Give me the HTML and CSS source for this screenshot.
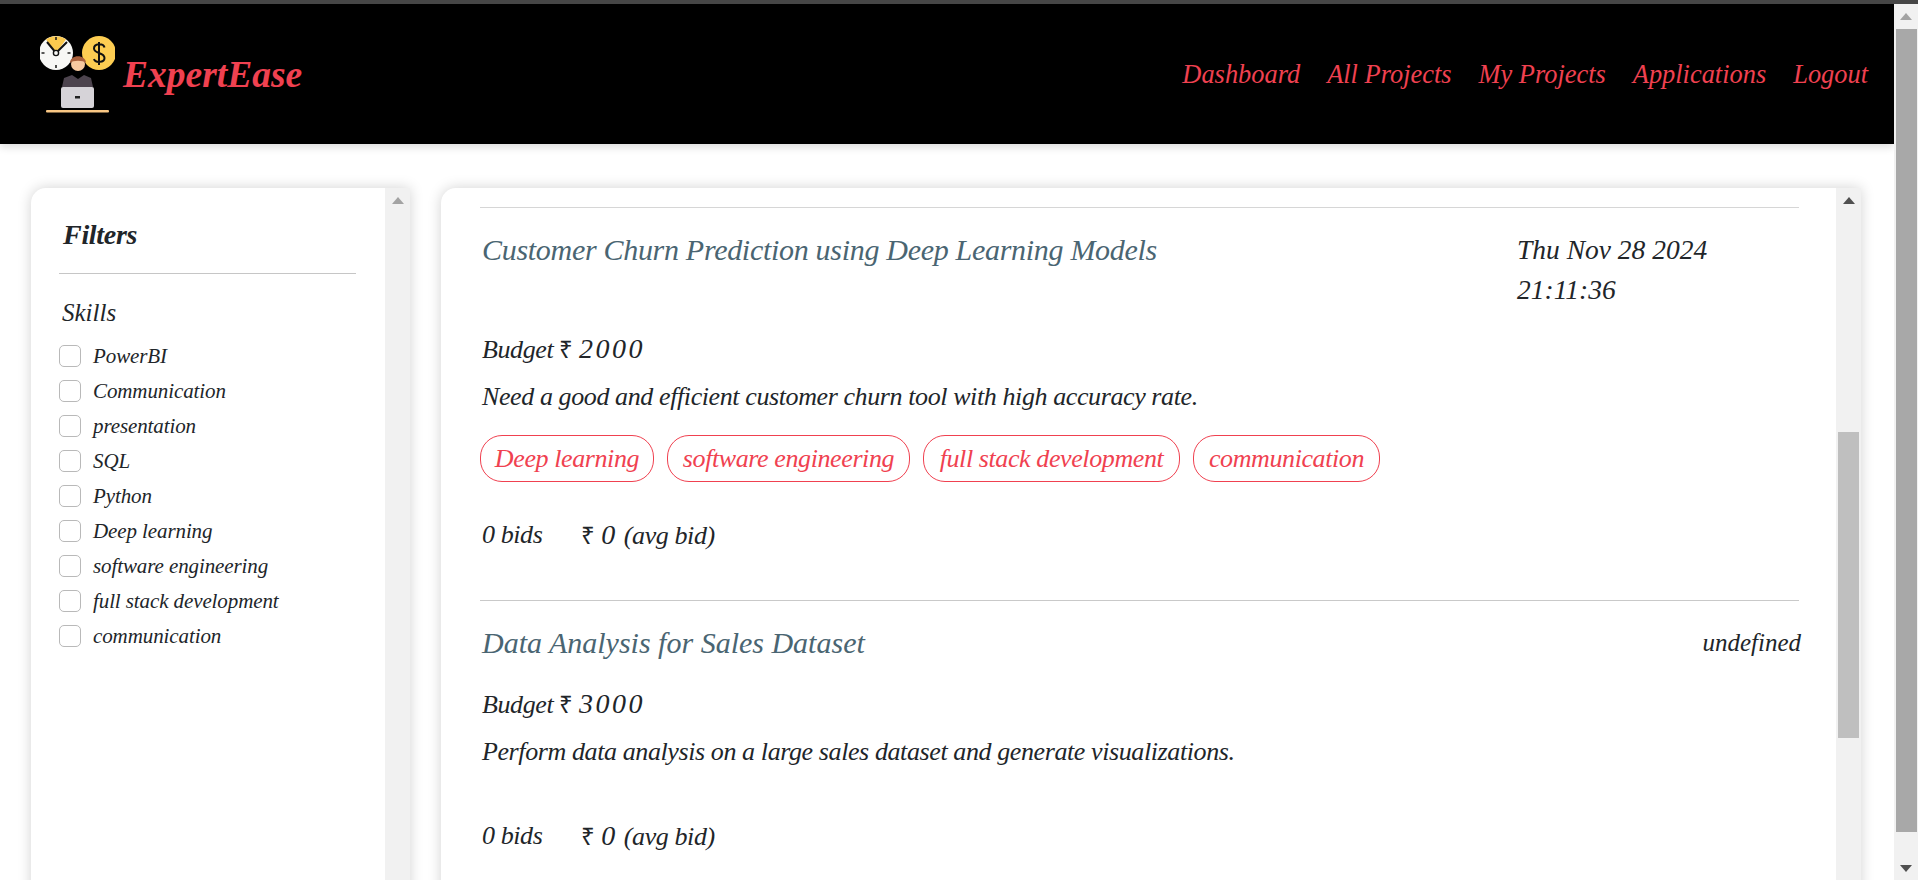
FILE: index.html
```html
<!DOCTYPE html>
<html lang="en">
<head>
<meta charset="utf-8">
<title>ExpertEase</title>
<link rel="stylesheet" href="styles.css">
</head>
<body>
<div class="topstrip"></div>
<div class="window">
  <div class="page">
    <header class="navbar">
      <a class="brand" href="#">
        <svg class="logo" viewBox="0 0 75 85" width="75" height="85" aria-hidden="true">
          <circle cx="16" cy="23" r="17" fill="#f7f7f5"/>
          <path d="M6 9.500 A17 17 0 0 1 26 9.500 L16 23 Z" fill="#fbc94e"/>
          <path d="M7 12 L16 23 L27 12" fill="none" stroke="#111" stroke-width="2"/>
          <circle cx="16" cy="23" r="2.600" fill="#f7f7f5" stroke="#111" stroke-width="1.400"/>
          <path d="M16 7v3M16 35v3M1.500 23h3M27.500 23h3" stroke="#222" stroke-width="1.600"/>
          <circle cx="59" cy="23" r="17" fill="#fdcd52"/>
          <path d="M64.500 17.500 C63.500 13 54 13 54 18.500 C54 24 64.500 22 64.500 28 C64.500 33 55 33 54 29 M59 12 V35" fill="none" stroke="#111" stroke-width="2"/>
          <path d="M22 57 L24 48 L32 45 L38 49 L44 45 L51 48 L53 57 Z" fill="#4d444e"/>
          <circle cx="38" cy="34" r="7" fill="#f7c9a0"/>
          <path d="M30 33 C30 24 46 24 46 33 C43 30 33 30 30 33 Z" fill="#a9603c"/>
          <rect x="21" y="57" width="33" height="21" rx="2" fill="#d6d3d8"/>
          <rect x="35" y="66" width="5" height="2.500" fill="#222"/>
          <rect x="6" y="80" width="63" height="2.500" rx="1" fill="#f9c784"/>
        </svg>
        <span class="brand-name">ExpertEase</span>
      </a>
      <nav class="nav-links">
        <a href="#">Dashboard</a>
        <a href="#">All Projects</a>
        <a href="#">My Projects</a>
        <a href="#">Applications</a>
        <a href="#">Logout</a>
      </nav>
    </header>

    <main class="content">
      <aside class="panel filters">
        <div class="panel-body filter-body">
          <h2 class="filter-title">Filters</h2>
          <hr class="rule-filter">
          <h3 class="skills-title">Skills</h3>
          <ul class="skill-list">
            <li class="skill"><span class="check"></span><span class="skill-name">PowerBI</span></li>
            <li class="skill"><span class="check"></span><span class="skill-name">Communication</span></li>
            <li class="skill"><span class="check"></span><span class="skill-name">presentation</span></li>
            <li class="skill"><span class="check"></span><span class="skill-name">SQL</span></li>
            <li class="skill"><span class="check"></span><span class="skill-name">Python</span></li>
            <li class="skill"><span class="check"></span><span class="skill-name">Deep learning</span></li>
            <li class="skill"><span class="check"></span><span class="skill-name">software engineering</span></li>
            <li class="skill"><span class="check"></span><span class="skill-name">full stack development</span></li>
            <li class="skill"><span class="check"></span><span class="skill-name">communication</span></li>
          </ul>
        </div>
        <div class="scrollbar filters-bar"><span class="arrow-up arrow-light"></span></div>
      </aside>

      <section class="panel projects">
        <div class="panel-body project-body">
          <article class="project">
            <hr class="rule">
            <div class="project-head">
              <h3 class="project-title">Customer Churn Prediction using Deep Learning Models</h3>
              <div class="date date-wrap">Thu Nov 28 2024 21:11:36</div>
            </div>
            <div class="budget">Budget <span class="rupee">₹</span> <span class="num">2000</span></div>
            <p class="desc">Need a good and efficient customer churn tool with high accuracy rate.</p>
            <div class="tags">
              <span class="tag tag-a">Deep learning</span>
              <span class="tag tag-b">software engineering</span>
              <span class="tag tag-c">full stack development</span>
              <span class="tag tag-d">communication</span>
            </div>
            <div class="bids"><span class="bid-count">0 bids</span><span><span class="rupee">₹</span> <span class="num">0</span> (avg bid)</span></div>
          </article>
          <article class="project">
            <hr class="rule">
            <div class="project-head">
              <h3 class="project-title project-title-open">Data Analysis for Sales Dataset</h3>
              <div class="date">undefined</div>
            </div>
            <div class="budget">Budget <span class="rupee">₹</span> <span class="num">3000</span></div>
            <p class="desc">Perform data analysis on a large sales dataset and generate visualizations.</p>
            <div class="tags-empty"></div>
            <div class="bids"><span class="bid-count">0 bids</span><span><span class="rupee">₹</span> <span class="num">0</span> (avg bid)</span></div>
          </article>
        </div>
        <div class="scrollbar projects-bar">
          <span class="arrow-up arrow-dark"></span>
          <span class="thumb projects-thumb"></span>
        </div>
      </section>
    </main>
  </div>

  <div class="scrollbar page-bar">
    <span class="arrow-up arrow-light"></span>
    <span class="thumb page-thumb"></span>
    <span class="arrow-down"></span>
  </div>
</div>
</body>
</html>
```

FILE: styles.css
```css
* { box-sizing: border-box; }

html, body {
  margin: 0;
  height: 880px;
  overflow: hidden;
  background: #fff;
}

body {
  font-family: "Liberation Serif", serif;
  font-style: italic;
  color: #212529;
}

a { color: inherit; text-decoration: none; }
h2, h3, p, ul { margin: 0; padding: 0; font-weight: 400; }
ul { list-style: none; }
hr { border: 0; margin: 0; display: block; }

.topstrip { height: 4px; background: #464646; }

.window { display: flex; height: 876px; }

.page { flex: 1; min-width: 0; overflow: hidden; }

/* header */
.navbar {
  height: 140px;
  background: #000;
  display: flex;
  align-items: center;
  justify-content: space-between;
  padding: 0 26px 0 40px;
  box-shadow: 0 3px 8px rgba(0, 0, 0, .14);
  position: relative;
  color: #f04150;
}

.brand { display: flex; align-items: center; gap: 8px; }
.logo { display: block; margin-top: -3px; }
.brand-name { font-size: 37.500px; font-weight: 700; }

.nav-links { display: flex; gap: 27px; font-size: 26.400px; padding-top: 1px; }

/* panels */
.content {
  display: flex;
  gap: 31px;
  padding: 44px 33px 0 31px;
  align-items: flex-start;
}

.panel {
  display: flex;
  height: 760px;
  background: #fff;
  border-radius: 15px 0 0 0;
  box-shadow: 0 0 14px rgba(0, 0, 0, .18);
}

.panel-body { flex: 1; min-width: 0; }

.filters { width: 379px; flex: none; }
.projects { flex: 1; min-width: 0; }

/* scrollbars */
.scrollbar {
  flex: none;
  background: #f1f1f1;
  display: flex;
  flex-direction: column;
  align-items: center;
}

.filters-bar, .projects-bar { width: 25px; padding-top: 9px; }
.page-bar { width: 24px; padding-top: 9px; }

.arrow-up, .arrow-down {
  display: block;
  width: 0;
  height: 0;
  border-left: 6px solid transparent;
  border-right: 6px solid transparent;
}
.arrow-up { border-bottom: 7px solid #a3a3a3; }
.arrow-dark { border-bottom-color: #505050; }
.arrow-down { border-top: 7px solid #505050; margin-top: 33px; }

.thumb { display: block; width: 21px; }
.page-thumb { height: 803px; background: #a8a8a8; margin-top: 9px; }
.projects-thumb { height: 306px; background: #bfbfbf; margin-top: 228px; }

/* filters */
.filter-body { padding: 28px 29px 0 28px; }
.filter-title { font-size: 28px; line-height: 38px; font-weight: 700; letter-spacing: -.3px; padding-left: 4px; }
.rule-filter { height: 1px; background: #c6c6c6; margin: 19px 0 20px; }
.skills-title { font-size: 25px; line-height: 38px; margin-bottom: 13px; padding-left: 3px; }
.skill-list { display: flex; flex-direction: column; gap: 13px; }
.skill { display: flex; align-items: center; gap: 12px; height: 22px; font-size: 21px; letter-spacing: -.1px; }
.check {
  flex: none;
  width: 22px;
  height: 22px;
  border: 1px solid #b9b9b9;
  border-radius: 5px;
  background: #fff;
}
.skill-name { white-space: nowrap; }

/* projects */
.project-body { padding: 19px 37px 0 39px; }
.rule { height: 1px; background: #d6d6d6; margin-bottom: 22px; }
.project + .project .rule { background: #c9c9c9; }

.project-head {
  display: flex;
  justify-content: space-between;
  align-items: flex-start;
  min-height: 42px;
  margin-bottom: 19px;
}
.project-title { font-size: 30px; line-height: 40px; letter-spacing: -.3px; color: #4a6572; padding-left: 2px; white-space: nowrap; }
.project-title-open { letter-spacing: 0; }
.date { font-size: 25px; line-height: 40px; white-space: nowrap; margin-right: -2px; }
.date-wrap { font-size: 27.500px; width: 230px; white-space: normal; margin-right: 52px; }

.budget { font-size: 26px; line-height: 40px; letter-spacing: -.4px; padding-left: 2px; }
.rupee { font-family: "Liberation Sans", sans-serif; font-style: normal; font-size: 24px; }
.num { font-size: 28px; letter-spacing: 2.500px; }
.desc { font-size: 26px; line-height: 40px; letter-spacing: -.4px; padding-left: 2px; margin-top: 7px; }

.tags { display: flex; gap: 13px; margin: 18px 0 33px; }
.tags-empty { height: 44px; }
.tag {
  height: 47px;
  border: 1px solid #f04150;
  border-radius: 22px;
  color: #f04150;
  font-size: 26px;
  letter-spacing: -.4px;
  line-height: 45px;
  text-align: center;
  white-space: nowrap;
}
.tag-a { width: 174px; }
.tag-b { width: 243px; }
.tag-c { width: 257px; }
.tag-d { width: 187px; }

.bids { display: flex; gap: 39px; font-size: 26px; line-height: 40px; letter-spacing: -.4px; padding-left: 2px; margin-bottom: 44px; }
```
